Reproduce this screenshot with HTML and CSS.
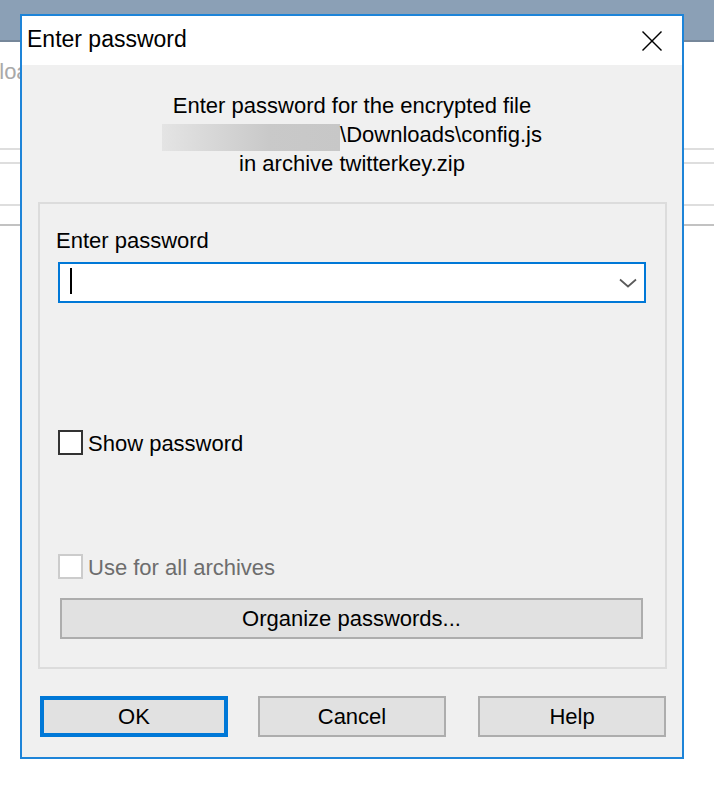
FILE: index.html
```html
<!DOCTYPE html>
<html>
<head>
<meta charset="utf-8">
<title>Enter password</title>
<link rel="stylesheet" href="styles.css">
</head>
<body>
<div class="desktop">
  <div class="strip"></div>
  <div class="bgtext">Download</div>
  <div class="bgline l1"></div>
  <div class="bgline l2"></div>
  <div class="bgline l3"></div>
  <div class="bgline l4"></div>
</div>

<div class="window">
  <div class="titlebar">
    <span class="title">Enter password</span>
    <svg class="close" width="20" height="20" viewBox="0 0 20 20">
      <line x1="0.5" y1="0.5" x2="19.5" y2="19.5" stroke="#000" stroke-width="1.4"/>
      <line x1="19.5" y1="0.5" x2="0.5" y2="19.5" stroke="#000" stroke-width="1.4"/>
    </svg>
  </div>
  <div class="client">
    <div class="msg">
      <div>Enter password for the encrypted file</div>
      <div><span class="blur"></span>\Downloads\config.js</div>
      <div>in archive twitterkey.zip</div>
    </div>

    <div class="group">
      <div class="label">Enter password</div>
      <div class="combo">
        <span class="caret"></span>
        <svg class="chev" width="18" height="10" viewBox="0 0 18 10">
          <polyline points="1,1.5 9,8.5 17,1.5" fill="none" stroke="#5a5a5a" stroke-width="1.7"/>
        </svg>
      </div>
      <div class="check show">
        <span class="box"></span>
        <span class="ctext">Show password</span>
      </div>
      <div class="check disabled">
        <span class="box"></span>
        <span class="ctext">Use for all archives</span>
      </div>
      <div class="btn organize">Organize passwords...</div>
    </div>

    <div class="buttons">
      <div class="btn default">OK</div>
      <div class="btn">Cancel</div>
      <div class="btn help">Help</div>
    </div>
  </div>
</div>
</body>
</html>
```

FILE: styles.css
```css
html, body {
  margin: 0;
  padding: 0;
}
body {
  width: 714px;
  height: 792px;
  overflow: hidden;
  background: #ffffff;
  font-family: "Liberation Sans", Arial, sans-serif;
  font-size: 22px;
  color: #000;
  position: relative;
}

/* background application behind the dialog */
.desktop {
  display: flex;
  flex-direction: column;
}
.strip {
  height: 40px;
  background: #8ba0b6;
  border-bottom: 2px solid #76879a;
}
.bgtext {
  margin-top: 15px;
  margin-left: -57px;
  line-height: 29px;
  color: #a9a9a9;
  white-space: nowrap;
}
.bgline {
  height: 2px;
  background: #dedede;
}
.l1 { margin-top: 62px; }
.l2 { margin-top: 12px; }
.l3 { margin-top: 40px; }
.l4 { margin-top: 18px; background: #c2c2c2; }

/* dialog window */
.window {
  position: absolute;
  left: 20px;
  top: 14px;
  width: 660px;
  border: 2px solid #1e84d8;
  display: flex;
  flex-direction: column;
}
.titlebar {
  height: 49px;
  background: #ffffff;
  display: flex;
  align-items: center;
  justify-content: space-between;
}
.title {
  font-size: 23px;
  padding-left: 5px;
  padding-bottom: 3px;
}
.close {
  margin-right: 20px;
  display: block;
}
.client {
  background: #f0f0f0;
  padding-top: 26px;
  padding-bottom: 20px;
  display: flex;
  flex-direction: column;
}
.msg {
  text-align: center;
  line-height: 29px;
  white-space: nowrap;
}
.msg > div {
  height: 29px;
}
.blur {
  display: inline-block;
  width: 178px;
  height: 27px;
  margin-bottom: -3px;
  vertical-align: -6px;
  background: linear-gradient(to right, #e4e4e4, #c9c9c9 60%, #c7c7c7);
}

.group {
  margin: 24px 15px 0 16px;
  border: 2px solid #dcdcdc;
  padding: 22px 0 28px 0;
  display: flex;
  flex-direction: column;
}
.label {
  line-height: 29px;
  padding-left: 16px;
}
.combo {
  margin: 7px 0 0 18px;
  width: 584px;
  height: 37px;
  border: 2px solid #0078d7;
  background: #ffffff;
  display: flex;
  justify-content: space-between;
  align-items: center;
}
.caret {
  align-self: flex-start;
  margin: 4px 0 0 10px;
  width: 2px;
  height: 26px;
  background: #000;
}
.chev {
  display: block;
  margin-right: 7px;
}
.check {
  display: flex;
  align-items: flex-start;
  margin-left: 18px;
  height: 25px;
}
.check.show { margin-top: 127px; }
.check.disabled { margin-top: 99px; color: #6d6d6d; }
.box {
  width: 21px;
  height: 21px;
  border: 2px solid #333333;
  background: #ffffff;
}
.check.disabled .box {
  border-color: #cccccc;
}
.ctext {
  line-height: 27px;
  margin-left: 5px;
}

.btn {
  height: 37px;
  border: 2px solid #adadad;
  background: #e1e1e1;
  display: flex;
  align-items: center;
  justify-content: center;
  line-height: 29px;
}
.organize {
  margin: 19px 0 0 20px;
  width: 579px;
}
.buttons {
  margin-top: 27px;
  padding-left: 18px;
  display: flex;
  gap: 30px;
}
.buttons .btn {
  width: 184px;
}
.buttons .btn.default {
  width: 180px;
  height: 33px;
  border: 4px solid #0078d7;
}
.buttons .help {
  margin-left: 2px;
}
```
